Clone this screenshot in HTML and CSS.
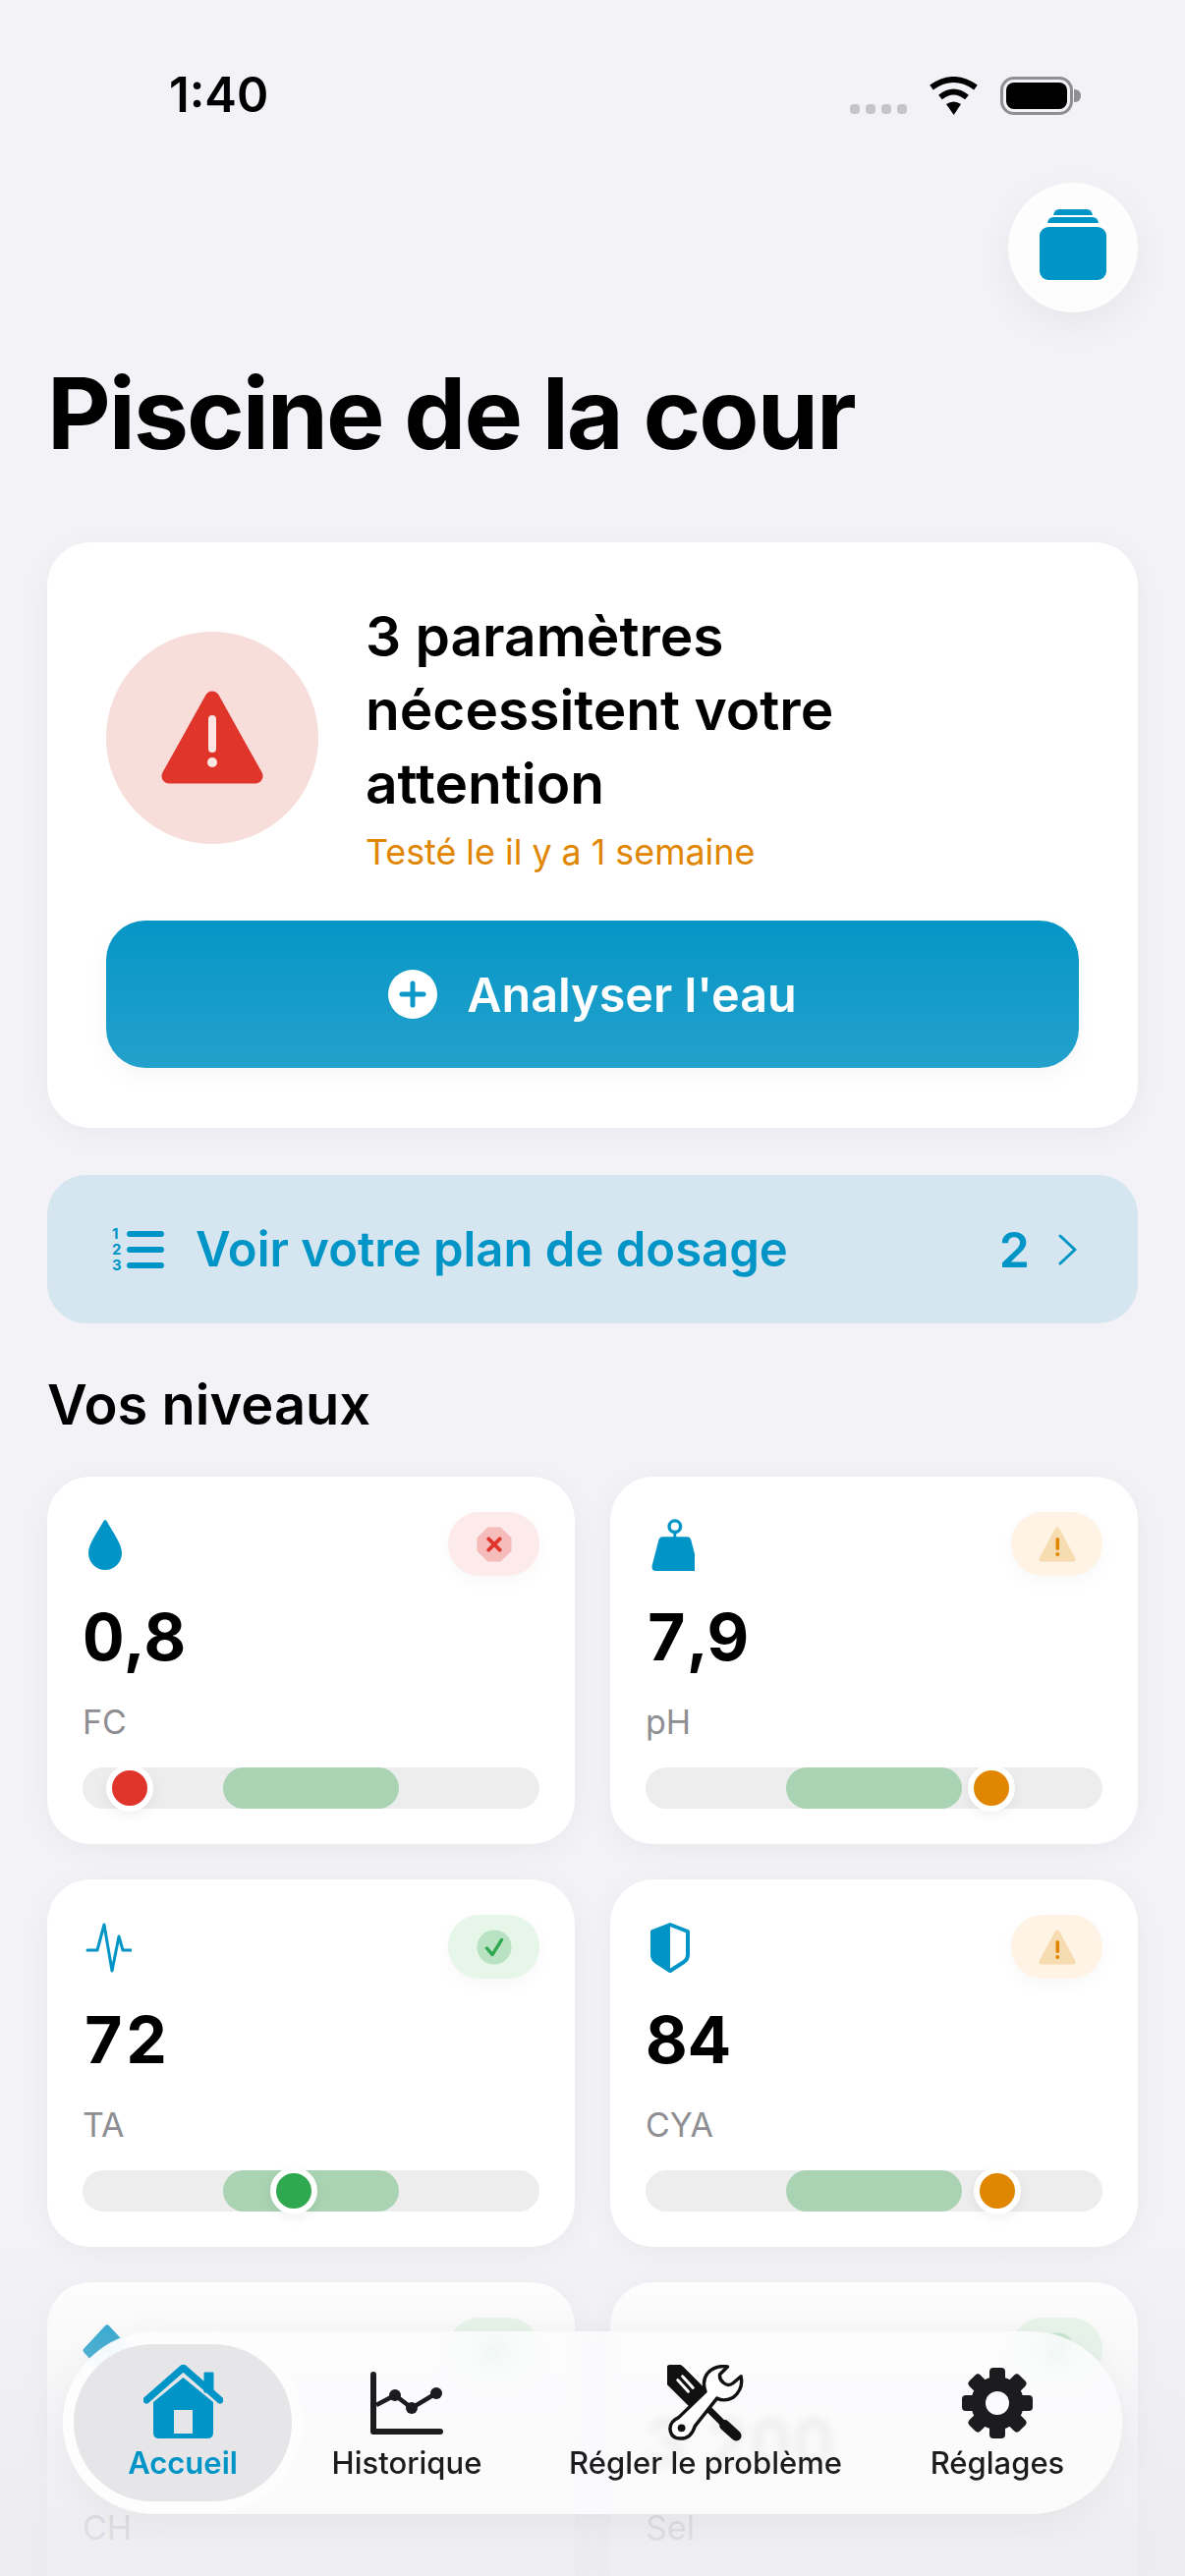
FILE: index.html
```html
<!DOCTYPE html>
<html lang="fr">
<head>
  <meta charset="UTF-8" />
  <meta name="viewport" content="width=device-width, initial-scale=1.0" />
  <title>Piscine de la cour</title>
  <link rel="stylesheet" href="styles.css">
</head>
<body>
  <div class="status">
    <span class="time">1:40</span>
    <div class="status-right">
      <div class="signal"><i></i><i></i><i></i><i></i></div>
      <svg class="wifi" viewBox="0 0 51 39"><path d="M3 11Q25.500-5 48 11M12 21Q25.500 10 39 21" fill="none" stroke="#000" stroke-width="6"/><path d="M18 28Q25.700 23 33 28L25.700 39Z"/></svg>
      <div class="battery"><i></i></div>
    </div>
  </div>

  <main class="page">
    <div class="top-action">
      <div class="round-btn">
        <svg class="stack-icon" viewBox="0 0 68 72"><path d="M14 6q1-6 6-6h28q5 0 6 6zM8 14q1-6 6-6h40q5 0 6 6z" fill="#0095c6"/><rect y="18" width="68" height="54" rx="9" fill="#0095c6"/></svg>
      </div>
    </div>

    <h1>Piscine de la cour</h1>

    <section class="card hero">
      <div class="hero-top">
        <div class="alert-circle">
          <svg class="alert-icon" viewBox="0 0 104 95"><path d="M52 8 96 87H8Z" fill="#e0352b" stroke="#e0352b" stroke-width="15" stroke-linejoin="round"/><rect x="48" y="25" width="8" height="38" rx="4" fill="#fbe6e3"/><circle cx="52" cy="73" r="5" fill="#fbe6e3"/></svg>
        </div>
        <div class="hero-text">
          <h2>3 paramètres nécessitent votre attention</h2>
          <p class="tested">Testé le il y a 1 semaine</p>
        </div>
      </div>
      <button class="analyse-btn">
        <svg class="plus-icon" viewBox="0 0 50 50"><circle cx="25" cy="25" r="25" fill="#fff"/><path d="M25 14V36M14 25H36" stroke="#0e98c8" stroke-width="5" stroke-linecap="round"/></svg>
        Analyser l'eau
      </button>
    </section>

    <a class="dosage">
      <div class="list-nums"><span>1</span><span>2</span><span>3</span></div>
      <svg class="list-bars" viewBox="0 0 38 44"><path d="M3 6H35M3 22H35M3 38H35" stroke="#0095c6" stroke-width="6" stroke-linecap="round"/></svg>
      <span class="dosage-label">Voir votre plan de dosage</span>
      <span class="dosage-count">2</span>
      <svg class="chevron" viewBox="0 0 19 32"><path d="M2 2 17 16 2 30" fill="none" stroke="#0095c6" stroke-width="3" stroke-linecap="round" stroke-linejoin="round"/></svg>
    </a>

    <h3>Vos niveaux</h3>

    <div class="levels">
      <div class="card level">
        <div class="level-top">
          <svg class="level-icon" viewBox="2 0 50 53"><path d="M25 1Q26 1 27 3C33 14 42 25 42 35A17 17 0 0 1 8 35C8 25 17 14 23 3Q24 1 25 1Z" fill="#0095c6"/></svg>
          <div class="badge bad">
            <svg viewBox="0 0 38 38"><path d="M12 1H26L37 12V26L26 37H12L1 26V12Z" fill="#f6bcbc" stroke="#f6bcbc" stroke-linejoin="round"/><path d="M13 13 25 25M25 13 13 25" stroke="#e0352b" stroke-width="4" stroke-linecap="round"/></svg>
          </div>
        </div>
        <div class="value">0,8</div>
        <div class="name">FC</div>
        <div class="track"><div class="range"></div><div class="dot dot-red" style="left:10.3%"></div></div>
      </div>

      <div class="card level">
        <div class="level-top">
          <svg class="level-icon" viewBox="-5 0 50 55"><circle cx="25" cy="8" r="6" fill="none" stroke="#0095c6" stroke-width="3.500"/><path d="M25 14V20" stroke="#0095c6" stroke-width="3"/><path d="M12 19H38Q41 19 42 22L49 49Q50 55 45 55H5Q0 55 1 49L8 22Q9 19 12 19Z" fill="#0095c6"/></svg>
          <div class="badge warn">
            <svg viewBox="0 0 38 36"><path d="M19 3 35 33H3Z" fill="#f6dcb0" stroke="#f6dcb0" stroke-width="5" stroke-linejoin="round"/><rect x="17.500" y="11" width="3.600" height="13" rx="1.800" fill="#e08600"/><circle cx="19.300" cy="28" r="2.100" fill="#e08600"/></svg>
          </div>
        </div>
        <div class="value">7,9</div>
        <div class="name">pH</div>
        <div class="track"><div class="range"></div><div class="dot dot-orange" style="left:75.700%"></div></div>
      </div>

      <div class="card level">
        <div class="level-top">
          <svg class="level-icon" viewBox="-3 0 50 53"><path d="M2 29H12L19 3 27 50 34 15 38 29H48" fill="none" stroke="#0095c6" stroke-width="3" stroke-linecap="round" stroke-linejoin="round"/></svg>
          <div class="badge ok">
            <svg viewBox="0 0 38 38"><circle cx="19" cy="19" r="18.500" fill="#b8e2c2"/><path d="M11 20 17 27 27 11" fill="none" stroke="#2fa84f" stroke-width="3.500" stroke-linecap="round" stroke-linejoin="round"/></svg>
          </div>
        </div>
        <div class="value">72</div>
        <div class="name">TA</div>
        <div class="track"><div class="range"></div><div class="dot dot-green" style="left:46.200%"></div></div>
      </div>

      <div class="card level">
        <div class="level-top">
          <svg class="level-icon" viewBox="0 0 50 53"><path d="M25 3 43 10V34Q43 38 39 41L25 50Q22 48 11 41 7 38 7 34V10Z" fill="none" stroke="#0095c6" stroke-width="4" stroke-linejoin="round"/><path d="M25 3V50L11 41Q7 38 7 34V10Z" fill="#0095c6"/></svg>
          <div class="badge warn">
            <svg viewBox="0 0 38 36"><path d="M19 3 35 33H3Z" fill="#f6dcb0" stroke="#f6dcb0" stroke-width="5" stroke-linejoin="round"/><rect x="17.500" y="11" width="3.600" height="13" rx="1.800" fill="#e08600"/><circle cx="19.300" cy="28" r="2.100" fill="#e08600"/></svg>
          </div>
        </div>
        <div class="value">84</div>
        <div class="name">CYA</div>
        <div class="track"><div class="range"></div><div class="dot dot-orange" style="left:77%"></div></div>
      </div>

      <div class="card level">
        <div class="level-top">
          <svg class="level-icon" viewBox="0 0 58 62"><path d="M29 4 54 31 29 58 4 31Z" fill="#0095c6" stroke="#0095c6" stroke-width="7" stroke-linejoin="round"/></svg>
          <div class="badge ok">
            <svg viewBox="0 0 38 38"><circle cx="19" cy="19" r="18.500" fill="#b8e2c2"/><path d="M11 20 17 27 27 11" fill="none" stroke="#2fa84f" stroke-width="3.500" stroke-linecap="round" stroke-linejoin="round"/></svg>
          </div>
        </div>
        <div class="value">280</div>
        <div class="name">CH</div>
      </div>

      <div class="card level">
        <div class="level-top">
          <div class="level-icon"></div>
          <div class="badge ok">
            <svg viewBox="0 0 38 38"><circle cx="19" cy="19" r="18.500" fill="#b8e2c2"/><path d="M11 20 17 27 27 11" fill="none" stroke="#2fa84f" stroke-width="3.500" stroke-linecap="round" stroke-linejoin="round"/></svg>
          </div>
        </div>
        <div class="value">3 200</div>
        <div class="name">Sel</div>
      </div>
    </div>
  </main>

  <div class="bottom-fade"></div>

  <nav class="tabbar">
    <a class="tab active">
      <svg class="tab-icon" viewBox="0 0 81 78"><path d="M62 8H71V28H62Z" fill="#0095c6" stroke="#0095c6" stroke-width="1" stroke-linejoin="round"/><path d="M3 36 40.500 3 78 36" fill="none" stroke="#0095c6" stroke-width="7" stroke-linecap="round" stroke-linejoin="round"/><path d="M10 38 40.500 13 71 38V69Q71 75 65 75H16Q10 75 10 69Z" fill="#0095c6"/><rect x="31" y="46" width="19" height="24" fill="#e6e6e9"/></svg>
      <span>Accueil</span>
    </a>
    <a class="tab">
      <svg class="tab-icon" viewBox="0 0 74 78"><g transform="translate(0 7)"><path d="M3 3V61H71" fill="none" stroke="#1c1c1e" stroke-width="6" stroke-linecap="round" stroke-linejoin="round"/><path d="M6 34 25 24 42 37 67 22" fill="none" stroke="#1c1c1e" stroke-width="4.500"/><circle cx="25" cy="24" r="6" fill="#1c1c1e"/><circle cx="42" cy="37" r="6" fill="#1c1c1e"/><circle cx="67" cy="22" r="6" fill="#1c1c1e"/></g></svg>
      <span>Historique</span>
    </a>
    <a class="tab">
      <svg class="tab-icon" viewBox="38 15 80 80"><path d="M46 26 68 48" stroke="#111" stroke-width="25" stroke-linecap="round"/><path d="M70 50 100 80" stroke="#111" stroke-width="7"/><path d="M98 78 110 89" stroke="#111" stroke-width="11" stroke-linecap="round"/><path d="M49 31 60 43M54 27 65 39" stroke="#fff" stroke-width="3" stroke-linecap="round"/><path d="M101 17 93 25Q92 30 97 34 102 38 107 34L115 27Q118 40 107 49 98 54 90 50L67 79Q63 92 52 92 42 92 41 82 41 74 50 70L78 43Q74 32 80 24 88 15 101 17Z" fill="#fff" stroke="#111" stroke-width="3.500" stroke-linejoin="round"/><circle cx="53" cy="81" r="4" fill="#111"/></svg>
      <span>Régler le problème</span>
    </a>
    <a class="tab">
      <svg class="tab-icon" viewBox="0 0 72 78">
        <g transform="translate(0 3)" fill="#1c1c1e">
          <circle cx="36" cy="36" r="27"/>
          <rect x="28" y="0" width="16" height="18" rx="4"/>
          <rect x="28" y="0" width="16" height="18" rx="4" transform="rotate(45 36 36)"/>
          <rect x="28" y="0" width="16" height="18" rx="4" transform="rotate(90 36 36)"/>
          <rect x="28" y="0" width="16" height="18" rx="4" transform="rotate(135 36 36)"/>
          <rect x="28" y="0" width="16" height="18" rx="4" transform="rotate(180 36 36)"/>
          <rect x="28" y="0" width="16" height="18" rx="4" transform="rotate(225 36 36)"/>
          <rect x="28" y="0" width="16" height="18" rx="4" transform="rotate(270 36 36)"/>
          <rect x="28" y="0" width="16" height="18" rx="4" transform="rotate(315 36 36)"/>
          <circle cx="36" cy="36" r="12" fill="#fbfbfd"/>
        </g>
      </svg>
      <span>Réglages</span>
    </a>
  </nav>
</body>
</html>
```

FILE: styles.css
```css
:root{--blue:#0095c6;--red:#e0352b;--orange:#e08600;--green:#2fa84f}
*,*::before,*::after{box-sizing:border-box;margin:0;padding:0}
html,body{height:2622px;overflow:hidden}
body{position:relative;font-family:Inter,"Liberation Sans",sans-serif;background:#f2f2f7;color:#000}

/* status bar */
.status{display:flex;justify-content:space-between;align-items:flex-start;height:186px;padding:68px 114px 0 172px}
.time{font-size:49px;font-weight:600;line-height:58px}
.status-right{display:flex;align-items:flex-end;height:39px;margin-top:10px}
.signal{display:flex;gap:6px;margin-right:22px;margin-bottom:1px}
.signal i{width:10px;height:10px;border-radius:4px;background:#c4c4c9}
.wifi{width:51px;height:39px;margin-right:22px}
.battery{position:relative;width:74px;height:39px;border:3px solid #8e8e93;border-radius:14px;padding:3px}
.battery i{display:block;height:100%;border-radius:8px;background:#000}
.battery::after{content:"";position:absolute;right:-11px;top:10px;width:7px;height:13px;border-radius:0 6px 6px 0;background:#8e8e93}

.page{padding:0 48px}
.top-action{display:flex;justify-content:flex-end}
.round-btn{width:132px;height:132px;border-radius:50%;background:#fdfdfe;box-shadow:0 12px 40px rgba(0,0,0,.05);display:flex;align-items:center;justify-content:center}
.stack-icon{width:68px;height:72px;margin-top:-6px}
h1{font-size:100px;font-weight:700;line-height:120px;margin-top:43px;letter-spacing:-2px}

.card{background:#fff;box-shadow:0 6px 32px rgba(0,0,0,.045)}

/* hero */
.hero{border-radius:44px;padding:58px 60px 61px;margin-top:71px}
.hero-top{display:flex;align-items:center;gap:48px}
.alert-circle{width:216px;height:216px;flex:none;border-radius:50%;background:#f7dedb;display:flex;align-items:center;justify-content:center}
.alert-icon{width:104px;height:95px}
h2{font-size:56.800px;font-weight:600;line-height:75px;max-width:540px}
.tested{font-size:35.800px;line-height:48px;margin-top:8px;color:var(--orange)}
.analyse-btn{display:flex;align-items:center;justify-content:center;gap:30px;width:100%;height:150px;margin-top:46px;border:none;border-radius:40px;background:linear-gradient(#0596c6,#24a1cc);color:#fff;font-family:inherit;font-size:48.500px;font-weight:600;box-shadow:0 8px 24px rgba(0,0,0,.04)}
.plus-icon{width:50px;height:50px}

/* dosage row */
.dosage{display:flex;align-items:center;height:151px;margin-top:48px;padding:0 62px 0 66px;border-radius:40px;background:#d5e6f0;color:var(--blue)}
.list-nums{display:flex;flex-direction:column;font-size:15px;font-weight:700;line-height:16px;width:15px}
.list-bars{width:38px;height:44px;margin-right:32px}
.dosage-label{font-size:49px;font-weight:600}
.dosage-count{margin-left:auto;font-size:50px;font-weight:600}
.chevron{width:19px;height:32px;margin-left:29px}

h3{font-size:56px;font-weight:600;line-height:68px;margin-top:49px}

/* levels */
.levels{display:grid;grid-template-columns:1fr 1fr;gap:36px;margin-top:39px}
.level{border-radius:44px;padding:36px;height:374px}
.level-top{display:flex;justify-content:space-between;align-items:flex-start;height:65px}
.level-icon{width:50px;height:53px;margin-top:7px}
.badge{width:93px;height:65px;border-radius:32px;display:flex;align-items:center;justify-content:center;box-shadow:0 6px 18px rgba(0,0,0,.03)}
.badge svg{width:36px;height:36px}
.warn svg{width:38px;height:38px}
.bad{background:#fdeaea}
.warn{background:#fef3e4}
.ok{background:#e6f6e8}
.value{font-size:66px;font-weight:700;line-height:80px;margin-top:22px;font-variant-numeric:tabular-nums;letter-spacing:1px}
.name{font-size:34px;line-height:40px;margin-top:27px;color:#8e8e93}
.track{position:relative;height:42px;margin-top:26px;border-radius:21px;background:#ededed}
.range{position:absolute;left:30.800%;width:38.400%;top:0;bottom:0;border-radius:21px;background:#a9d3b2}
.dot{position:absolute;top:-3px;width:48px;height:48px;margin-left:-24px;border-radius:50%;border:6px solid #fff;box-shadow:0 4px 12px rgba(0,0,0,.06)}
.dot-red{background:var(--red)}
.dot-orange{background:var(--orange)}
.dot-green{background:var(--green)}

/* bottom fade + floating tab bar */
.bottom-fade{position:absolute;left:0;right:0;bottom:0;height:340px;background:linear-gradient(rgba(236,236,240,0),rgba(236,236,240,.85) 85%)}
.tabbar{position:absolute;left:64px;top:2373px;width:1078px;height:186px;border-radius:93px;padding:13px 0 13px 11px;display:grid;grid-template-columns:222px 234px 374px 220px;background:rgba(252,252,253,.88);backdrop-filter:blur(5px);box-shadow:0 8px 40px rgba(0,0,0,.05)}
.tab{display:flex;flex-direction:column;align-items:center;height:160px;padding-top:21px;border-radius:80px;color:#1c1c1e;font-size:31px;font-weight:500;line-height:36px}
.tab span{margin-top:4px;white-space:nowrap}
.tab-icon{width:auto;height:78px}
.active{background:#e6e6e9;color:var(--blue);font-weight:600;box-shadow:0 0 0 11px rgba(255,255,255,.6)}
```
